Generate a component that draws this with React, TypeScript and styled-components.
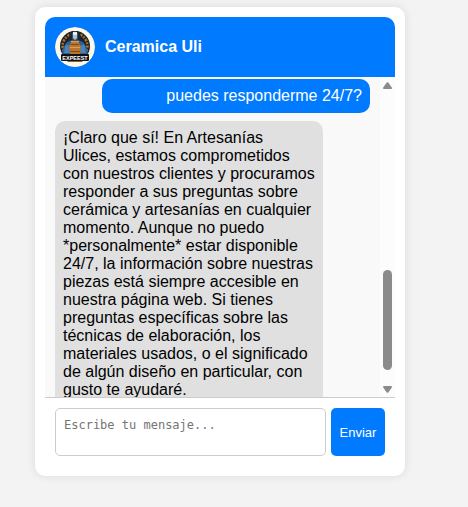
import React, { useState } from 'react';
import styled, { createGlobalStyle } from 'styled-components';

const GlobalStyle = createGlobalStyle`
  * { box-sizing: border-box; }
  body {
    margin: 0;
    background: #f3f3f3;
    font-family: "Liberation Sans", Arial, sans-serif;
    font-size: 16px;
    line-height: 18px;
    color: #000;
  }
`;

const Page = styled.main`
  padding: 7px 31px 31px 35px;
`;

const ChatCard = styled.section`
  width: 100%;
  max-width: 370px;
  padding: 10px;
  border-radius: 10px;
  background: #fff;
  box-shadow: 0 0 10px rgba(0, 0, 0, 0.1);
`;

const Header = styled.header`
  display: flex;
  align-items: center;
  gap: 10px;
  padding: 10px;
  border-radius: 10px 10px 0 0;
  background: #007bff;
  color: #fff;
`;

const Title = styled.h1`
  margin: 0;
  font-size: 16px;
  font-weight: 700;
`;

const Avatar = styled.svg`
  display: block;
  width: 40px;
  height: 40px;
  border-radius: 50%;
`;

const Conversation = styled.div`
  display: flex;
  height: 320px;
  background: #f9f9f9;
`;

const MessageList = styled.div`
  display: flex;
  flex: 1;
  flex-direction: column;
  gap: 8px;
  min-width: 0;
  padding: 2px 10px 10px;
  overflow-y: auto;
  scrollbar-width: none;
`;

const Message = styled.p<{ $from: 'user' | 'bot' }>`
  flex: none;
  width: 85%;
  margin: 0;
  padding: 8px;
  border-radius: 10px;
  align-self: ${({ $from }) => ($from === 'user' ? 'flex-end' : 'flex-start')};
  text-align: ${({ $from }) => ($from === 'user' ? 'right' : 'left')};
  background: ${({ $from }) => ($from === 'user' ? '#007bff' : '#e0e0e0')};
  color: ${({ $from }) => ($from === 'user' ? '#fff' : '#000')};
`;

const ScrollTrack = styled.div`
  display: flex;
  flex: none;
  flex-direction: column;
  align-items: center;
  width: 15px;
  padding: 5px 0 4px;
  background: #fcfcfc;
`;

const ScrollArrow = styled.svg`
  display: block;
  flex: none;
  width: 9px;
  height: 7px;
  fill: #8b8b8b;
`;

const ScrollThumb = styled.div`
  width: 9px;
  height: 100px;
  margin: auto 0 16px;
  border-radius: 5px;
  background: #8b8b8b;
`;

const Composer = styled.form`
  display: flex;
  gap: 5px;
  padding: 10px;
  border-top: 1px solid #ccc;
`;

const MessageInput = styled.textarea`
  flex: 1;
  min-width: 0;
  height: 48px;
  padding: 8px;
  border: 1px solid #ccc;
  border-radius: 5px;
  background: #fff;
  font: 12px/16px "DejaVu Sans Mono", monospace;
  resize: none;

  &::placeholder {
    color: #757575;
  }
`;

const SendButton = styled.button`
  flex: none;
  width: 54px;
  padding: 0;
  border: 0;
  border-radius: 5px;
  background: #007bff;
  color: #fff;
  font: 13px "Liberation Sans", Arial, sans-serif;
  cursor: pointer;
`;

function Logo() {
  return (
    <Avatar viewBox="0 0 40 40" role="img" aria-label="Expeest">
      <circle cx="20" cy="20" r="20" fill="#fdf8e8" />
      <circle cx="20" cy="19" r="15" fill="#1b2129" />
      <circle cx="20" cy="19" r="12.4" fill="none" stroke="#a9732f" strokeWidth="2.6" strokeDasharray="1.7 1.4 2.4 1.2" />
      <path d="M14 9l3-5h6l3 5 1 6H13z" fill="#1b2530" />
      <path d="M12 15l5-2h6l5 2 4 6 1 7H7l1-7z" fill="#2f5f93" />
      <path d="M11 17l3 2 1 7h-6l1-6zM29 17l-3 2-1 7h6l-1-6z" fill="#4b82b8" />
      <path d="M17 6l3-2 3 2v6l-3 3-3-3z" fill="#34536f" />
      <path d="M18 5h4v3h-4z" fill="#e8edf0" />
      <path d="M18 8h4v3l-2 2-2-2z" fill="#b8bfc4" />
      <path d="M16 14h8v2l2 3-1 8H15l-1-8 2-3z" fill="#b9752d" />
      <path d="M16 14h8v1h-8zM15 20h10v1H15z" fill="#dda04e" />
      <path d="M16 17h8v1h-8zM15 24h10v1H15z" fill="#7b4a1c" />
      <path d="M11 33h18l-2 2H13z" fill="#8b6335" />
      <rect x="6" y="27" width="28" height="7" rx="1" fill="#101216" />
      <text x="20" y="32.5" textAnchor="middle" fontFamily="Liberation Sans, Arial, sans-serif" fontSize="5.5" fontWeight="700" fill="#fff">EXPEEST</text>
    </Avatar>
  );
}

export default function App() {
  const [draft, setDraft] = useState('');

  return (
    <>
      <GlobalStyle />
      <Page>
        <ChatCard aria-label="Chat">
          <Header>
            <Logo />
            <Title>Ceramica Uli</Title>
          </Header>
          <Conversation>
            <MessageList role="log">
              <Message $from="user">puedes responderme 24/7?</Message>
              <Message $from="bot">
                ¡Claro que sí! En Artesanías Ulices, estamos comprometidos con nuestros
                clientes y procuramos responder a sus preguntas sobre cerámica y artesanías
                en cualquier momento. Aunque no puedo *personalmente* estar disponible 24/7,
                la información sobre nuestras piezas está siempre accesible en nuestra página
                web. Si tienes preguntas específicas sobre las técnicas de elaboración, los
                materiales usados, o el significado de algún diseño en particular, con gusto
                te ayudaré.
              </Message>
            </MessageList>
            <ScrollTrack aria-hidden="true">
              <ScrollArrow viewBox="0 0 9 7">
                <path d="M3.7.6Q4.5-.2 5.3.6L8.8 5.5Q9.2 7 8 7H1Q-.2 7 .2 5.5z" />
              </ScrollArrow>
              <ScrollThumb />
              <ScrollArrow viewBox="0 0 9 7">
                <path d="M3.7 6.4Q4.5 7.2 5.3 6.4L8.8 1.5Q9.2 0 8 0H1Q-.2 0 .2 1.5z" />
              </ScrollArrow>
            </ScrollTrack>
          </Conversation>
          <Composer onSubmit={(event) => event.preventDefault()}>
            <MessageInput
              aria-label="Mensaje"
              placeholder="Escribe tu mensaje..."
              value={draft}
              onChange={(event) => setDraft(event.target.value)}
            />
            <SendButton type="submit">Enviar</SendButton>
          </Composer>
        </ChatCard>
      </Page>
    </>
  );
}
